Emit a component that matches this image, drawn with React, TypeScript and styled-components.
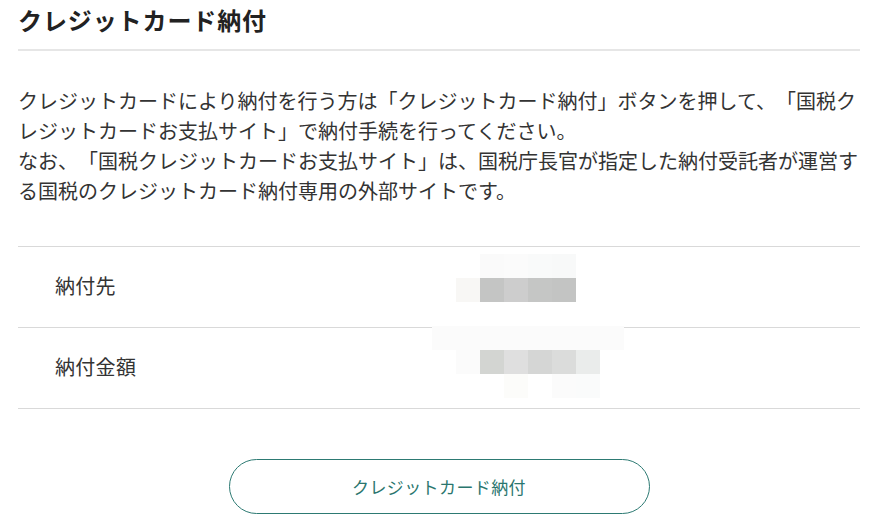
import React from "react";
import styled, { createGlobalStyle } from "styled-components";

const GlobalStyle = createGlobalStyle`
  html, body { margin: 0; padding: 0; background: #ffffff; }
  body {
    font-family: "Noto Sans CJK JP", "Noto Sans", sans-serif;
    color: #333333;
    text-spacing-trim: space-all;
  }
`;

const Page = styled.main`
  width: 842px;
  padding: 2px 17px 0 18px;
`;

const Title = styled.h2`
  margin: 0;
  font-size: 24px;
  line-height: 36px;
  font-weight: 700;
  color: #222222;
  letter-spacing: 0.9px;
  padding-bottom: 11px;
  border-bottom: 2px solid #e6e6e6;
`;

const Lead = styled.p`
  margin: 35px -3px 0 0;
  font-size: 20px;
  line-height: 30px;
  letter-spacing: 0;
  color: #333333;
  text-spacing-trim: space-all;
`;

const Table = styled.dl`
  margin: 40px 0 0;
  border-top: 1px solid #d9d9d9;
`;

const Row = styled.div`
  position: relative;
  display: grid;
  grid-template-columns: 438px 1fr;
  align-items: center;
  height: 80px;
  border-bottom: 1px solid #d9d9d9;
`;

const Label = styled.dt`
  margin: 0;
  padding: 0 0 4px 37px;
  font-size: 20px;
  letter-spacing: 0.3px;
  color: #333333;
`;

const Value = styled.dd`
  margin: 0;
  font-size: 20px;
`;

const Mosaic = styled.div<{ $top: number }>`
  position: absolute;
  left: 414px;
  top: ${(p) => p.$top}px;
  display: grid;
  grid-template-columns: repeat(8, 24px);
  grid-auto-rows: 24px;
`;

const Cell = styled.span<{ $c: string }>`
  background: ${(p) => p.$c};
`;

const Actions = styled.div`
  display: flex;
  justify-content: center;
  margin-top: 50px;
`;

const PayButton = styled.button`
  width: 421px;
  height: 55px;
  border: 1px solid #2d7a73;
  border-radius: 28px;
  background: #ffffff;
  color: #2a766e;
  font-family: "Noto Sans CJK JP", "Noto Sans", sans-serif;
  font-size: 17px;
  letter-spacing: 0.4px;
  cursor: pointer;
`;

const W = "transparent";

const mosaic1 = [
  [W, W, "#fafafa", "#fbfbfb", "#f9fafa", "#f8f9f9", W, W],
  [W, "#f8f7f5", "#c4c5c4", "#cdcdcd", "#c5c6c5", "#c3c4c3", W, W],
];

const mosaic2 = [
  ["#fbfbfb", "#fbfbfb", "#fbfbfb", "#fbfbfb", "#fbfbfb", "#fbfbfb", "#fbfbfb", "#fbfbfb"],
  [W, "#fbfbfb", "#d3d5d2", "#dfdfdf", "#d5d6d5", "#dbdcdb", "#eaeceb", W],
  [W, W, W, "#fcfcfa", W, "#fbfbfb", "#fafbfb", W],
];

const renderMosaic = (rows: string[][], top: number) => (
  <Mosaic $top={top} aria-hidden="true">
    {rows.flatMap((r, i) => r.map((c, j) => <Cell key={`${i}-${j}`} $c={c} />))}
  </Mosaic>
);

export default function App() {
  return (
    <>
      <GlobalStyle />
      <Page>
        <Title>クレジットカード納付</Title>
        <Lead>
          クレジットカードにより納付を行う方は「クレジットカード納付」ボタンを押して、「国税クレジットカードお支払サイト」で納付手続を行ってください。
          <br />
          なお、「国税クレジットカードお支払サイト」は、国税庁長官が指定した納付受託者が運営する国税のクレジットカード納付専用の外部サイトです。
        </Lead>
        <Table>
          <Row>
            <Label>納付先</Label>
            <Value />
            {renderMosaic(mosaic1, 7)}
          </Row>
          <Row>
            <Label>納付金額</Label>
            <Value />
            {renderMosaic(mosaic2, -2)}
          </Row>
        </Table>
        <Actions>
          <PayButton type="button">クレジットカード納付</PayButton>
        </Actions>
      </Page>
    </>
  );
}
